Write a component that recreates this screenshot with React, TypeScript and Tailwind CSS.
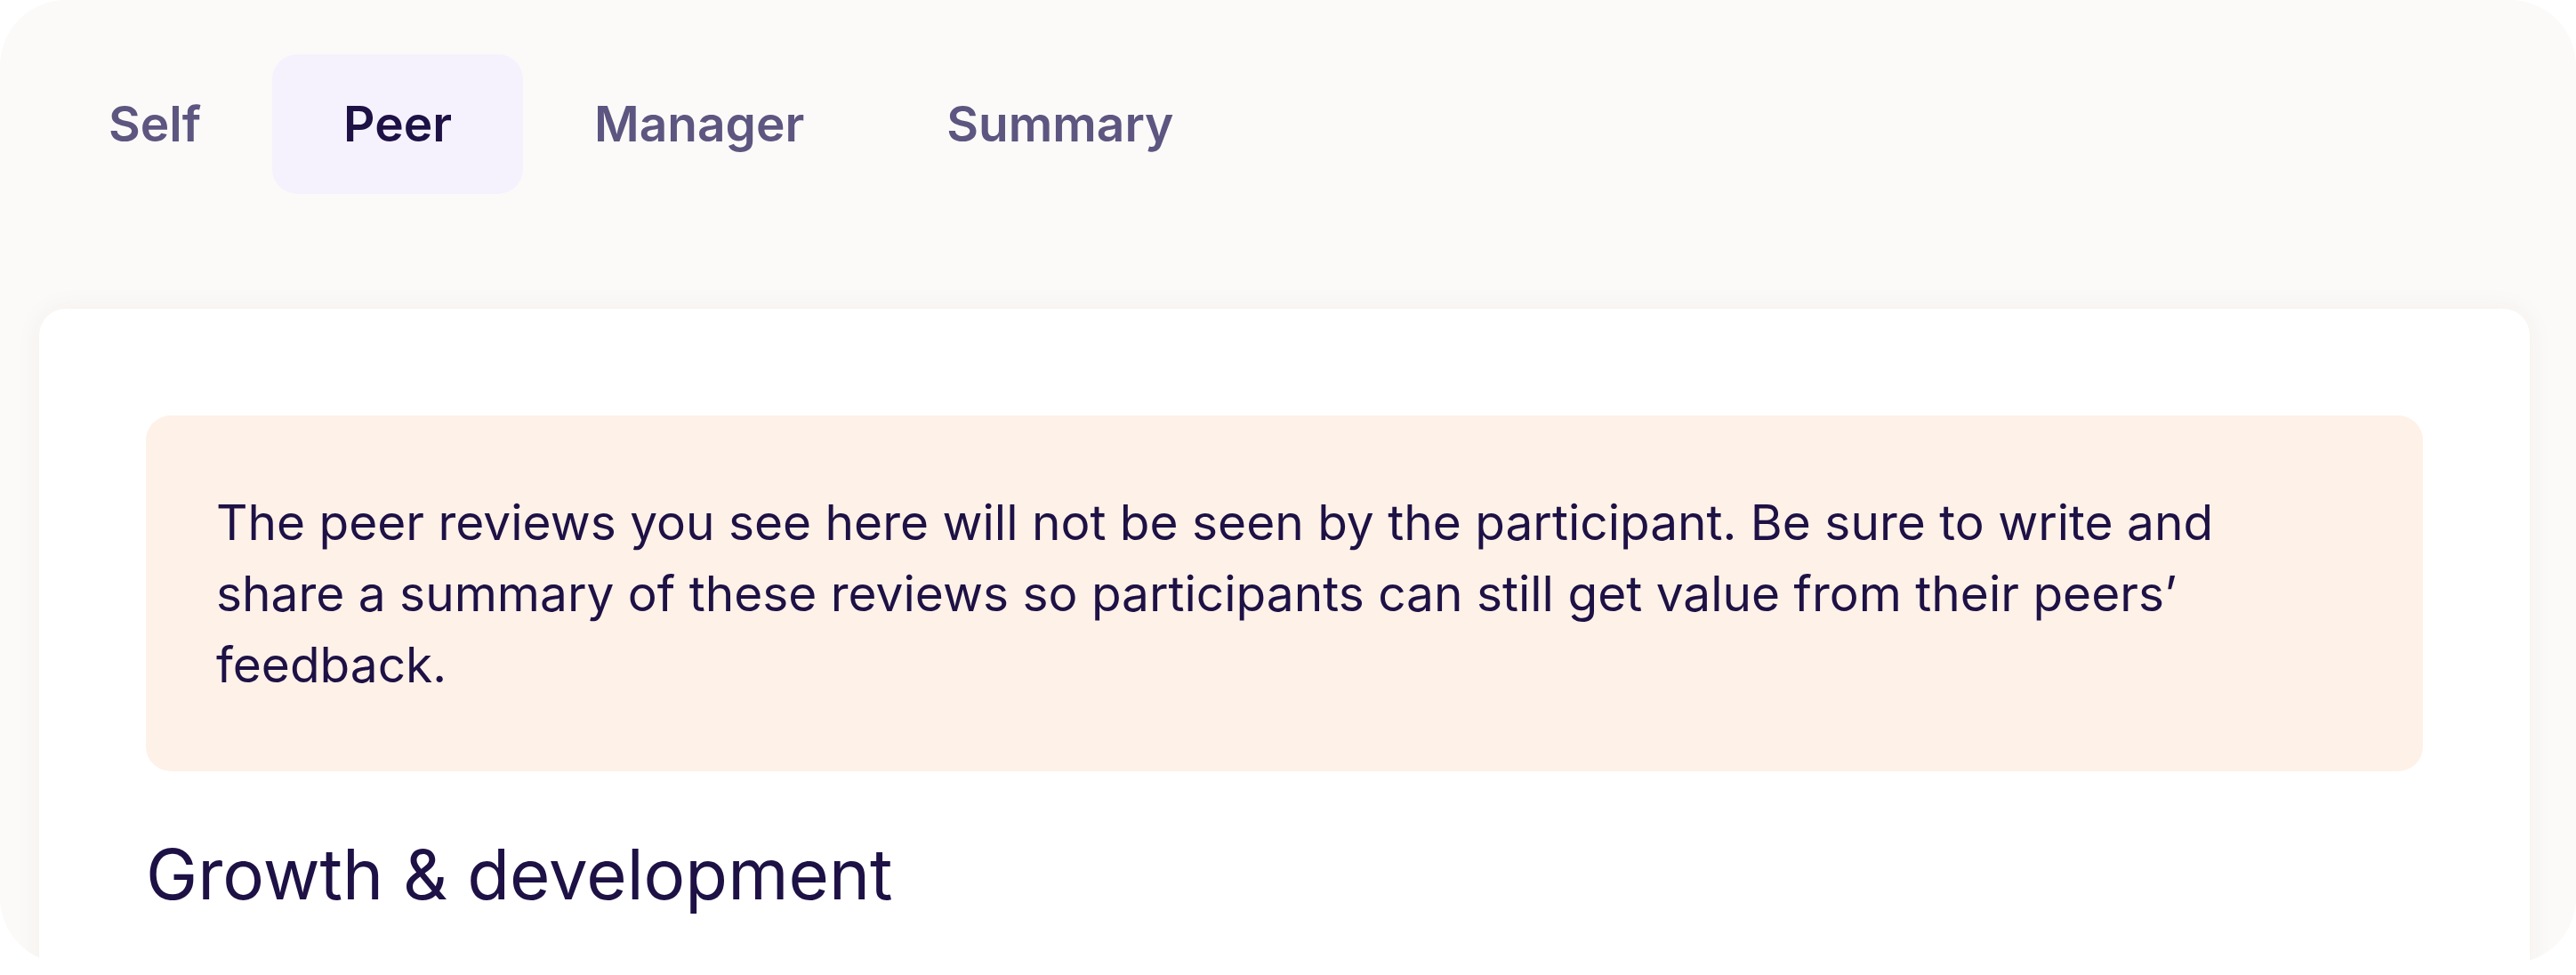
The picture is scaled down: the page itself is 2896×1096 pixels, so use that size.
const tabs = ["Self", "Peer", "Manager", "Summary"];

export default function App() {
  const active = "Peer";

  return (
    <div className="w-[2896px] bg-white" style={{ fontFamily: "Inter, 'Noto Sans', sans-serif" }}>
      <div className="h-[1083px] overflow-hidden rounded-[74px] bg-[#fcfaf8] pl-[44px] pr-[52px] pt-[61px]">
        {/* Tabs */}
        <div className="-ml-[2px] flex">
          {tabs.map((tab) => (
            <button
              key={tab}
              className={`flex h-[157px] items-center rounded-[28px] px-[80px] text-[55px] font-semibold ${
                tab === active ? "bg-[#f5f2fe] text-[#1d1145]" : "text-[#5d5680]"
              }`}
            >
              {tab}
            </button>
          ))}
        </div>

        {/* Card */}
        <div className="mt-[129px] h-[900px] rounded-[30px] bg-white px-[120px] pt-[120px] shadow-[0_0_30px_rgba(60,40,20,0.05)]">
          <div className="rounded-[28px] bg-[#fef1e8] px-[79px] py-[80px] text-[55px] leading-[80px] text-[#1d1145]">
            The peer reviews you see here will not be seen by the participant. Be sure to write and
            <br />
            share a summary of these reviews so participants can still get value from their peers’
            <br />
            feedback.
          </div>
          <h2 className="mt-[69px] text-[78px] font-normal leading-[1.2] text-[#1d1145]">
            Growth &amp; development
          </h2>
        </div>
      </div>
    </div>
  );
}
